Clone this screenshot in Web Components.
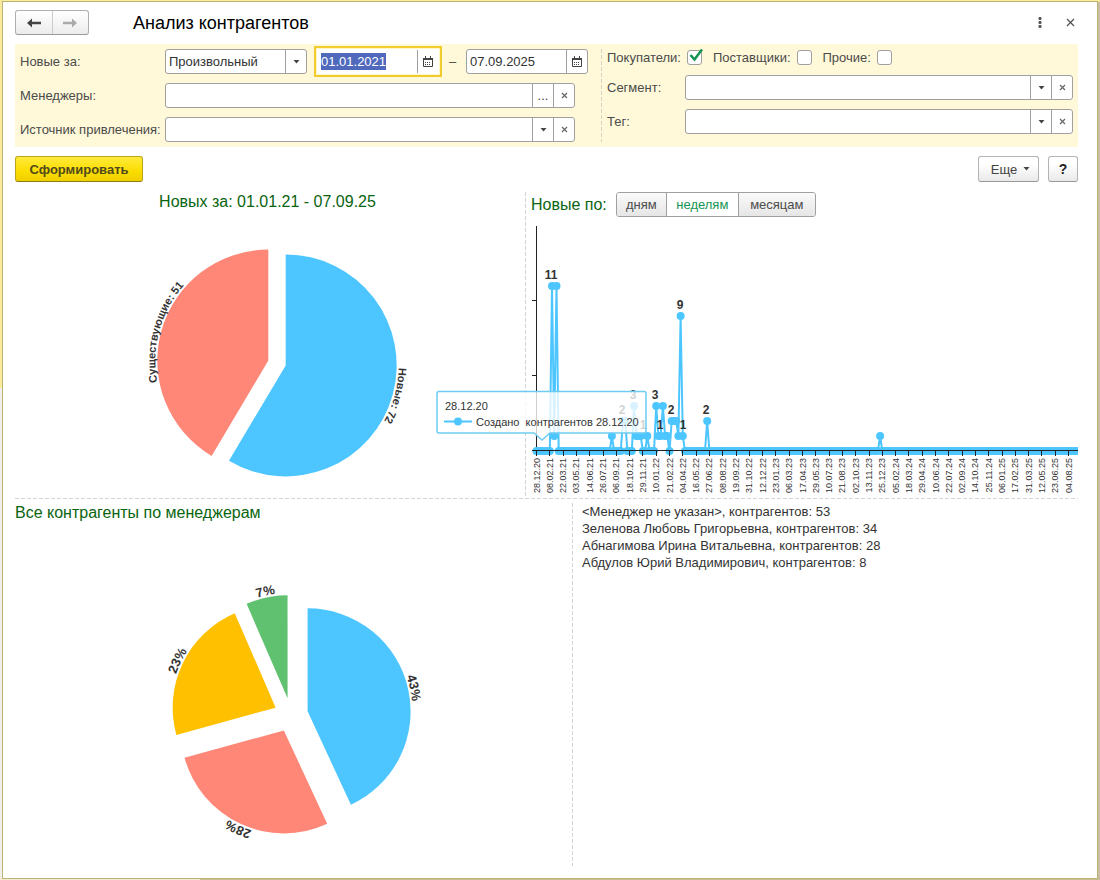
<!DOCTYPE html>
<html lang="ru">
<head>
<meta charset="utf-8">
<title>Анализ контрагентов</title>
<style>
  html { height: 100%; }
  body {
    margin: 0; min-height: 100%; box-sizing: border-box; padding: 1px 2px 1px 2px;
    display: flex; flex-direction: column;
    font: 13px/17px "Liberation Sans", Arial, sans-serif; color: #4b4b4b;
    background: linear-gradient(#f8ec9c, #f8ec9c) top / 100% 2px no-repeat,
                linear-gradient(#c9bfa0, #c9bfa0) right / 2px 100% no-repeat,
                linear-gradient(90deg, #f3ead0 200px, #c9bd92 200px) bottom / 100% 2px no-repeat,
                linear-gradient(#f8ec9c 388px, #f1efec 388px);
  }
  app-window { flex: 1; }
</style>
</head>
<body>
<app-window>
  <title-bar>Анализ контрагентов</title-bar>
  <filter-panel>
    <period-filter slot="left"></period-filter>
    <text-field slot="left" wide label="Менеджеры:" action="dots"></text-field>
    <text-field slot="left" wide label="Источник привлечения:" action="drop"></text-field>
    <check-field slot="checks" label="Покупатели:" checked></check-field>
    <check-field slot="checks" label="Поставщики:"></check-field>
    <check-field slot="checks" label="Прочие:"></check-field>
    <text-field slot="right" label="Сегмент:" action="drop"></text-field>
    <text-field slot="right" label="Тег:" action="drop"></text-field>
  </filter-panel>
  <command-bar></command-bar>
  <split-row columns="510fr 553fr" line>
    <chart-block centered heading="Новых за: 01.01.21 - 07.09.25">
      <pie-chart width="510" height="287" cx="262" cy="153" r="111" explode="9" size="11"
        data='[["Новые: 72",72,"#4dc6ff"],["Существующие: 51",51,"#ff8778"]]'></pie-chart>
    </chart-block>
    <chart-block slot="second" tall heading="Новые по:">
      <period-switch slot="tools"></period-switch>
      <line-chart></line-chart>
    </chart-block>
  </split-row>
  <split-row columns="557fr 506fr">
    <chart-block heading="Все контрагенты по менеджерам">
      <pie-chart width="557" height="345" cx="276" cy="194" r="103" explode="17" size="13"
        data='[["43%",53,"#4dc6ff"],["28%",34,"#ff8778"],["23%",28,"#ffc000"],["7%",8,"#60c270"]]'></pie-chart>
    </chart-block>
    <manager-list slot="second"></manager-list>
  </split-row>
</app-window>

<script>
const FIELD = `
  *, *::before { box-sizing: border-box; }
  .box { display: flex; height: 25px; background: #fff; border: 1px solid #a0a0a0; border-radius: 3px; overflow: hidden; }
  input, select { flex: 1; min-width: 0; border: 0; margin: 0; padding: 0 3px; background: none; outline: 0; font: inherit; color: #333; }
  .box button { flex: none; width: 21px; border: 0; border-left: 1px solid #a0a0a0; margin: 0; padding: 0; background: none;
    display: grid; place-items: center; font: inherit; color: #444; }
  label { flex: none; }
`;
const ARROW = `<svg width="7" height="4" viewBox="0 0 7 4" aria-hidden="true"><path d="M0.5 0h6L3.5 3.5z" fill="#444"/></svg>`;
const CROSS = `<svg width="7" height="7" viewBox="0 0 7 7" aria-hidden="true"><path d="M1 1l5 5M6 1l-5 5" stroke="#666" stroke-width="1.2"/></svg>`;
const CALENDAR = `<svg width="10" height="11" viewBox="0 0 10 11" aria-hidden="true"><path d="M.5 2.5v8h9v-8z" fill="#fff" stroke="#444"/><path d="M0 2h10v2H0zM2 0h1v2H2zM7 0h1v2H7z" fill="#444"/><path d="M2 6.5h6M2 8.5h6" stroke="#444" stroke-dasharray="1 1"/></svg>`;

function define(name, css, html, init) {
  customElements.define(name, class extends HTMLElement {
    connectedCallback() {
      if (this.shadowRoot) return;
      const root = this.attachShadow({ mode: 'open' });
      root.innerHTML = `<style>${css}</style>` + (typeof html === 'function' ? html(this) : html);
      if (init) init(root, this);
    }
  });
}

define('app-window', `
  :host { display: flex; flex-direction: column; box-sizing: border-box; background: #fff; border: 1px solid #bdb377; padding: 8px 19px 12px 12px; }
`, `<slot></slot>`);

define('title-bar', `
  :host { display: flex; align-items: center; height: 25px; margin-bottom: 9px; }
  .nav { display: flex; box-sizing: border-box; width: 74px; height: 25px; border: 1px solid #b0b0b0; border-bottom-color: #999; border-radius: 3px; background: linear-gradient(#fff, #ececec); }
  button { border: 0; padding: 0; margin: 0; background: none; display: grid; place-items: center; }
  .nav button { flex: 1; }
  .nav button + button { border-left: 1px solid #ccc; }
  h1 { flex: 1; margin: 0 0 0 44px; font-size: 18px; line-height: 24px; font-weight: 400; color: #000; }
  .tools { display: flex; gap: 10px; margin-right: -2px; }
  .tools button { width: 20px; height: 20px; }
`, `<div class="nav">
  <button aria-label="Назад"><svg width="14" height="10" viewBox="0 0 14 10"><path d="M0 5l5-4.5v3.2h9v2.6H5v3.2z" fill="#444"/></svg></button>
  <button aria-label="Вперёд"><svg width="14" height="10" viewBox="0 0 14 10"><path d="M14 5L9 .5v3.2H0v2.6h9v3.2z" fill="#aaa"/></svg></button></div>
  <h1><slot></slot></h1>
  <div class="tools"><button aria-label="Меню"><svg width="4" height="12" viewBox="0 0 4 12" fill="#555"><rect x=".5" width="3" height="3" rx="1"/><rect x=".5" y="4" width="3" height="3" rx="1"/><rect x=".5" y="8" width="3" height="3" rx="1"/></svg></button>
  <button aria-label="Закрыть"><svg width="9" height="9" viewBox="0 0 9 9"><path d="M1 1l7 7M8 1L1 8" stroke="#555" stroke-width="1.3"/></svg></button></div>`);

define('filter-panel', `
  :host { display: grid; grid-template-columns: minmax(0, 586fr) minmax(0, 477fr); background: #fff9d9; padding: 5px 0; }
  .left, .right { display: flex; flex-direction: column; gap: 9px; min-width: 0; }
  .left { padding: 0 26px 0 5px; }
  .right { padding: 0 5px 0 6px; background: repeating-linear-gradient(#d6d3c0 0 4px, transparent 4px 6px) left / 1px 100% no-repeat; }
  .checks { display: flex; gap: 11px; height: 17px; }
`, `<div class="left"><slot name="left"></slot></div>
  <div class="right"><div class="checks"><slot name="checks"></slot></div><slot name="right"></slot></div>`);

define('text-field', FIELD + `
  :host { display: flex; align-items: center; }
  label { width: 78px; }
  :host([wide]) label { width: 145px; }
  .box { flex: 1; min-width: 0; }
`, el => `<label for="f">${el.getAttribute('label')}</label><div class="box"><input id="f" type="text">
  ${el.getAttribute('action') === 'dots' ? '<button aria-label="Выбрать">...</button>' : `<button aria-label="Показать список">${ARROW}</button>`}
  <button aria-label="Очистить">${CROSS}</button></div>`);

define('date-field', FIELD + `
  :host { display: block; flex: none; width: 122px; }
  :host([active]) .box { border-color: #fff; outline: 2px solid #f2cc2e; outline-offset: 1px; box-shadow: 0 0 0 1px #fff6c0; border-radius: 0; }
  ::selection { background: #5069bd; color: #fff; }
`, el => `<div class="box"><input type="text" aria-label="${el.getAttribute('label')}" value="${el.getAttribute('value')}"><button aria-label="Календарь">${CALENDAR}</button></div>`,
(root, el) => {
  if (!el.hasAttribute('active')) return;
  const input = root.querySelector('input');
  input.focus();
  input.select();
});

define('period-filter', FIELD + `
  :host { display: flex; align-items: center; }
  label { width: 145px; }
  .box { position: relative; flex: none; width: 142px; margin-right: 10px; }
  select { appearance: none; }
  .drop { position: absolute; right: 0; top: 0; bottom: 0; width: 21px; border-left: 1px solid #a0a0a0; display: grid; place-items: center; pointer-events: none; }
  .dash { flex: none; width: 27px; text-align: center; }
`, `<label for="p">Новые за:</label><div class="box"><select id="p"><option>Произвольный</option></select><span class="drop">${ARROW}</span></div>
  <date-field active label="Начало периода" value="01.01.2021"></date-field><span class="dash">–</span>
  <date-field label="Конец периода" value="07.09.2025"></date-field>`);

define('check-field', `
  :host { display: flex; align-items: center; gap: 6px; }
  .box { position: relative; display: block; width: 15px; height: 15px; }
  input { appearance: none; box-sizing: border-box; display: block; width: 15px; height: 15px; margin: 0; border: 1px solid #a0a0a0; border-radius: 3px; background: #fff; }
  svg { position: absolute; left: 2px; top: -2px; display: none; pointer-events: none; }
  input:checked + svg { display: block; }
`, el => `<label for="c">${el.getAttribute('label')}</label><span class="box"><input id="c" type="checkbox" ${el.hasAttribute('checked') ? 'checked' : ''}>
  <svg width="14" height="14" viewBox="0 0 14 14" aria-hidden="true"><path d="M1.5 7l4 4.500L13 1.500" fill="none" stroke="#159552" stroke-width="2.600"/></svg></span>`);

define('command-bar', `
  :host { display: flex; gap: 9px; margin: 9px 0 10px; height: 26px; }
  button { box-sizing: border-box; height: 26px; margin: 0; padding: 0; border: 1px solid #b3b3b3; border-bottom-color: #999; border-radius: 3px; background: linear-gradient(#fff 30%, #e9e9e9); font: inherit; color: #444; }
  .main { width: 128px; margin-right: auto; border-color: #bda41a; border-bottom-color: #8f7b10; background: linear-gradient(#ffea3c, #fbdd00 60%, #efcf00); font-weight: 700; color: #50491c; }
  .more { width: 61px; display: flex; align-items: center; justify-content: center; gap: 6px; padding-left: 4px; }
  .help { width: 30px; font-size: 14px; font-weight: 700; color: #222; }
`, `<button class="main">Сформировать</button><button class="more">Еще ${ARROW}</button><button class="help" aria-label="Справка">?</button>`);

define('split-row', `
  :host { display: grid; min-width: 0; }
  :host([line]) { padding-bottom: 2px; margin-bottom: 4px; background: repeating-linear-gradient(90deg, #d4d4d4 0 4px, transparent 4px 6px) bottom / 100% 1px no-repeat; }
  .first, .second { min-width: 0; }
  .second { padding-left: 1px; background: repeating-linear-gradient(#d4d4d4 0 4px, transparent 4px 6px) left / 1px 100% no-repeat; }
`, `<div class="first"><slot></slot></div><div class="second"><slot name="second"></slot></div>`,
(root, el) => { el.style.gridTemplateColumns = el.getAttribute('columns').replace(/(\d+fr)/g, 'minmax(0, $1)'); });

define('chart-block', `
  :host { display: block; }
  header { display: flex; gap: 9px; height: 18px; }
  :host([tall]) header { height: 25px; padding-left: 5px; align-items: center; }
  :host([centered]) header { justify-content: center; padding-right: 5px; }
  h2 { margin: 0; font-size: 16px; line-height: 20px; font-weight: 400; color: #0a640f; }
`, el => `<header><h2>${el.getAttribute('heading')}</h2><slot name="tools"></slot></header><slot></slot>`);

define('period-switch', `
  :host { display: flex; box-sizing: border-box; height: 25px; border: 1px solid #a0a0a0; border-radius: 3px; overflow: hidden; }
  button { border: 0; margin: 0; padding: 0; width: 49px; background: linear-gradient(#fafafa, #e6e6e6); font: inherit; color: #4b4b4b; }
  button + button { width: 72px; border-left: 1px solid #a0a0a0; }
  button:last-child { width: 77px; }
  button[aria-pressed=true] { background: #fff; color: #159552; }
`, `<button>дням</button><button aria-pressed="true">неделям</button><button>месяцам</button>`);

define('pie-chart', `
  :host { display: block; }
  svg { display: block; width: 100%; height: auto; overflow: visible; }
  text { font-weight: 700; fill: #333; text-anchor: middle; }
`, el => {
  const n = k => Number(el.getAttribute(k));
  const data = JSON.parse(el.getAttribute('data'));
  const total = data.reduce((s, d) => s + d[1], 0);
  const r = n('r');
  const at = (c, rad, a) => `${(c[0] + rad * Math.sin(a)).toFixed(2)} ${(c[1] - rad * Math.cos(a)).toFixed(2)}`;
  let a = 0, out = '';
  data.forEach(([name, value, color], i) => {
    const b = a + value / total * 2 * Math.PI, m = (a + b) / 2;
    const c = [n('cx') + n('explode') * Math.sin(m), n('cy') - n('explode') * Math.cos(m)];
    out += `<path fill="${color}" d="M${c.join(' ')}L${at(c, r, a)}A${r} ${r} 0 ${b - a > Math.PI ? 1 : 0} 1 ${at(c, r, b)}Z"/>
      <path id="arc${i}" fill="none" d="M${at(c, r + 2, m - 1)}A${r + 2} ${r + 2} 0 0 1 ${at(c, r + 2, m + 1)}"/>
      <text font-size="${n('size')}"><textPath href="#arc${i}" startOffset="50%">${name}</textPath></text>`;
    a = b;
  });
  return `<svg viewBox="0 0 ${n('width')} ${n('height')}">${out}</svg>`;
});

define('line-chart', `
  :host { display: block; position: relative; z-index: 1; }
  svg { display: block; width: 100%; height: auto; overflow: visible; }
  .axis { stroke: #222; fill: none; shape-rendering: crispEdges; }
  .dates text { font-size: 9px; fill: #333; text-anchor: end; }
  .values text { font-size: 12px; font-weight: 700; fill: #333; text-anchor: middle; }
  .tip text { font-size: 11px; fill: #333; }
`, () => {
  const X0 = 10.5, Y0 = 234, UNIT = 15, WEEK = 13.3 / 6, WEEKS = 244;
  const counts = { 7: 11, 8: 1, 9: 11, 34: 1, 39: 2, 40: 2, 44: 3, 45: 1, 46: 1, 47: 1, 50: 1, 54: 3, 55: 1, 56: 1, 57: 3, 58: 1, 59: 1, 61: 2, 62: 2, 63: 2, 64: 1, 65: 9, 66: 1, 77: 2, 155: 1 };
  let line = '', dots = '', ticks = '', dates = '';
  for (let i = 0; i <= WEEKS; i++) {
    const x = (X0 + i * WEEK).toFixed(1), y = Y0 - (counts[i] || 0) * UNIT;
    line += `${x},${y} `;
    dots += `<circle cx="${x}" cy="${y}" r="4"/>`;
    if (i % 6 === 0) {
      const d = new Date(Date.UTC(2020, 11, 28 + i * 7)).toISOString();
      ticks += `M${x} ${Y0}v5`;
      dates += `<text transform="translate(${Number(x) + 3} 241) rotate(-90)">${d.slice(8, 10)}.${d.slice(5, 7)}.${d.slice(2, 4)}</text>`;
    }
  }
  const values = [[25, 62, 11], [154, 92, 9], [107, 182, 3], [96, 197, 2], [117, 212, 1], [129, 182, 3], [134, 212, 1], [145, 197, 2], [157, 212, 1], [180, 197, 2]]
    .map(([x, y, v]) => `<text x="${x}" y="${y}">${v}</text>`).join('');
  return `<svg viewBox="0 0 552 280">
    <clipPath id="plot"><rect width="552" height="280"/></clipPath>
    <path class="axis" d="M${X0} 9V${Y0}M6 83.500h5M6 158.500h5"/>
    <g clip-path="url(#plot)"><polyline points="${line}" fill="none" stroke="#4dc6ff" stroke-width="2" stroke-linejoin="round"/>
    <g fill="#4dc6ff">${dots}</g></g>
    <path class="axis" d="M6 ${Y0 - .5}H552${ticks}"/>
    <g class="dates">${dates}</g><g class="values">${values}</g>
    <g class="tip"><path d="M-87 174.500H118a2 2 0 0 1 2 2V214a2 2 0 0 1-2 2H24l-8 7-8-7H-87a2 2 0 0 1-2-2V176.500a2 2 0 0 1 2-2z" fill="#fff" fill-opacity=".78" stroke="#6ecbf2" stroke-width="1.500"/>
      <path d="M-82 204.500h28" stroke="#4dc6ff" stroke-width="2"/><circle cx="-68" cy="204.500" r="4" fill="#4dc6ff"/>
      <text x="-81" y="193">28.12.20</text><text x="-50" y="209" xml:space="preserve">Создано  контрагентов 28.12.20</text></g>
  </svg>`;
});

define('manager-list', `
  :host { display: block; padding-left: 9px; }
  ul { list-style: none; margin: 0; padding: 0; color: #333; }
`, `<ul><li>&lt;Менеджер не указан&gt;, контрагентов: 53</li><li>Зеленова Любовь Григорьевна, контрагентов: 34</li>
  <li>Абнагимова Ирина Витальевна, контрагентов: 28</li><li>Абдулов Юрий Владимирович, контрагентов: 8</li></ul>`);

</script>
</body>
</html>
